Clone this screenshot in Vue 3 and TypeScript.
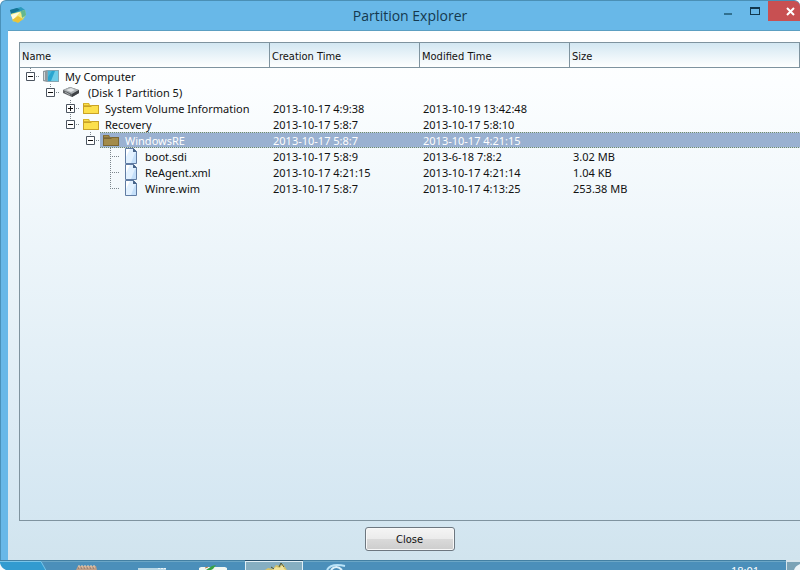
<script setup lang="ts">
import { computed, ref } from 'vue'

type Kind = 'computer' | 'disk' | 'folder' | 'file'

interface Entry {
  id: string
  name: string
  kind: Kind
  created?: string
  modified?: string
  size?: string
  children?: Entry[]
}

interface Row {
  entry: Entry
  guides: string[]
  expandable: boolean
  open: boolean
}

const root: Entry = {
  id: 'computer', name: 'My Computer', kind: 'computer',
  children: [{
    id: 'disk', name: '(Disk 1 Partition 5)', kind: 'disk',
    children: [
      { id: 'svi', name: 'System Volume Information', kind: 'folder', created: '2013-10-17 4:9:38', modified: '2013-10-19 13:42:48', children: [] },
      {
        id: 'recovery', name: 'Recovery', kind: 'folder', created: '2013-10-17 5:8:7', modified: '2013-10-17 5:8:10',
        children: [{
          id: 'winre', name: 'WindowsRE', kind: 'folder', created: '2013-10-17 5:8:7', modified: '2013-10-17 4:21:15',
          children: [
            { id: 'boot', name: 'boot.sdi', kind: 'file', created: '2013-10-17 5:8:9', modified: '2013-6-18 7:8:2', size: '3.02 MB' },
            { id: 'agent', name: 'ReAgent.xml', kind: 'file', created: '2013-10-17 4:21:15', modified: '2013-10-17 4:21:14', size: '1.04 KB' },
            { id: 'wim', name: 'Winre.wim', kind: 'file', created: '2013-10-17 5:8:7', modified: '2013-10-17 4:13:25', size: '253.38 MB' },
          ],
        }],
      },
    ],
  }],
}

const opened = ref(new Set(['computer', 'disk', 'recovery', 'winre']))
const selected = ref('winre')

function flatten(entry: Entry, parents: string[], last: boolean): Row[] {
  const open = opened.value.has(entry.id)
  const row: Row = {
    entry,
    guides: [...parents, last ? 'elbow' : 'tee'],
    expandable: entry.children !== undefined,
    open,
  }
  const below = [...parents, last ? 'blank' : 'line']
  const kids = open && entry.children ? entry.children : []
  return [row, ...kids.flatMap((kid, i) => flatten(kid, below, i === kids.length - 1))]
}

const rows = computed(() => flatten(root, [], true))

function toggle(id: string) {
  const next = new Set(opened.value)
  if (!next.delete(id)) next.add(id)
  opened.value = next
}
</script>

<template>
  <div class="desktop">
    <section class="window" aria-labelledby="window-title">
      <header class="titlebar">
        <svg class="app-icon" viewBox="0 0 18 18" aria-hidden="true">
          <path d="M1 4 12 1l4 3-13 5z" fill="#2b9bbd" />
          <path d="M1 4 8 2l3 2-9 4z" fill="#147293" />
          <path d="M2 8 16 4l1 5-3 5-10 2z" fill="#a9d08c" />
          <path d="m2 8 9-2 4 5-5 5-6-2z" fill="#f4ed83" />
          <path d="m2 9 9-3-7 8z" fill="#fffce0" />
          <path d="m3 14 6-4 5 3-5 4z" fill="#eac337" />
          <path d="m12 5 4-1 1 5-4 3z" fill="#63b78f" />
        </svg>
        <h1 id="window-title">Partition Explorer</h1>
        <div class="controls">
          <button type="button" aria-label="Minimize">
            <svg viewBox="0 0 27 21"><path d="M10 12h8v2h-8z" fill="#31708f" /></svg>
          </button>
          <button type="button" aria-label="Maximize">
            <svg viewBox="0 0 27 21"><path d="M9 6h10v8H9zM10 8v5h8V8z" fill="#12384d" fill-rule="evenodd" /></svg>
          </button>
          <button type="button" class="shut" aria-label="Close window">
            <svg viewBox="0 0 32 21"><path d="m19 7 7 7m0-7-7 7" stroke="#fff" stroke-width="2" /></svg>
          </button>
        </div>
      </header>

      <main class="body">
        <div class="listing">
          <table>
            <colgroup>
              <col class="col-name"><col class="col-date"><col class="col-date"><col>
            </colgroup>
            <thead>
              <tr>
                <th scope="col">Name</th>
                <th scope="col">Creation Time</th>
                <th scope="col">Modified Time</th>
                <th scope="col">Size</th>
              </tr>
            </thead>
            <tbody>
              <tr
                v-for="row in rows"
                :key="row.entry.id"
                :class="{ selected: selected === row.entry.id }"
                @click="selected = row.entry.id"
              >
                <td class="name">
                  <div class="node">
                    <span v-for="(guide, i) in row.guides" :key="i" class="guide" :class="guide">
                      <button
                        v-if="row.expandable && i === row.guides.length - 1"
                        type="button"
                        class="toggle"
                        :aria-label="(row.open ? 'Collapse ' : 'Expand ') + row.entry.name"
                        :aria-expanded="row.open"
                        @click.stop="toggle(row.entry.id)"
                      >
                        <svg viewBox="0 0 9 9">
                          <path d="M.5.5h8v8h-8z" fill="#fff" stroke="#4c5560" />
                          <path :d="row.open ? 'M2 4.5h5' : 'M2 4.5h5M4.5 2v5'" stroke="#111" />
                        </svg>
                      </button>
                    </span>
                    <span class="label">
                      <svg v-if="row.entry.kind === 'computer'" class="icon" viewBox="0 0 16 16">
                        <path d="M0 3 4 2v12l-4-1z" fill="#90999e" />
                        <path d="M1 4h1v8H1z" fill="#d4dadc" />
                        <path d="M4 2h12v12H4z" fill="#86a6b2" />
                        <path d="M5 3h10v10H5z" fill="#2aa5cf" />
                        <path d="M12 3h3v10h-7z" fill="#6fcde8" />
                        <path d="M5 3h4l-4 6z" fill="#4bb6d8" />
                      </svg>
                      <svg v-else-if="row.entry.kind === 'disk'" class="icon" viewBox="0 0 16 16">
                        <path d="m0 6 7-3 9 3v3l-7 4-9-4z" fill="#5e6265" />
                        <path d="m0 6 7-3 9 3-7 4z" fill="#a9aeb1" />
                        <path d="m3 6 5-2 4 2-4 2z" fill="#e2e5e7" />
                        <path d="m9 10 7-4v3l-7 4z" fill="#3d4144" />
                        <path d="m2 8 5 3" stroke="#a9adb0" />
                      </svg>
                      <svg v-else-if="row.entry.kind === 'folder'" class="icon" viewBox="0 0 16 16">
                        <path class="folder-back" d="M0 3h6l1 2h9v9H0z" />
                        <path class="folder-front" d="M1 7h7l1-1h6v7H1zM1 4h4l1 1H1z" />
                        <path class="folder-edge" d="M0 6.500h8l1-1h7M.5 4v9.500h15V5" />
                      </svg>
                      <svg v-else class="icon" viewBox="0 0 16 16">
                        <path d="M2.500.5h8l3 3v12h-11z" fill="#e2f1ff" stroke="#607ca3" />
                        <path d="M12 5h1v10H8z" fill="#c5e0fa" />
                        <path d="M3 1h4L3 9z" fill="#fff" />
                        <path d="M10 0v4h4z" fill="#476489" />
                      </svg>
                      <span class="text" :class="row.entry.kind">{{ row.entry.name }}</span>
                    </span>
                  </div>
                </td>
                <td>{{ row.entry.created }}</td>
                <td>{{ row.entry.modified }}</td>
                <td>{{ row.entry.size }}</td>
              </tr>
            </tbody>
          </table>
        </div>
        <footer class="actions">
          <button type="button" class="close">Close</button>
        </footer>
      </main>
    </section>

    <nav class="taskbar" aria-label="Taskbar">
      <button type="button" class="start" aria-label="Start">
        <svg viewBox="0 0 46 10">
          <path d="M0 1h41l5 9H0z" fill="#329bd0" />
          <path d="M0 1.5h41l5 9" fill="none" stroke="#79c4e8" />
          <path d="M0 3q1 5 6 7H0z" fill="#f4f8fa" />
        </svg>
      </button>
      <button type="button" class="task" aria-label="Notes">
        <svg viewBox="0 0 58 10">
          <path d="M19 6h18l1 4H17z" fill="#bd9d86" />
          <path d="M20 5v3m3-3v3m3-3v3m3-3v3m3-3v3m3-3v3" stroke="#f2d5b7" />
          <path d="M19 8h17" stroke="#776b67" stroke-dasharray="1 2" />
        </svg>
      </button>
      <button type="button" class="task" aria-label="Keyboard">
        <svg viewBox="0 0 58 10">
          <path d="M17 8h28v2H17z" fill="#b9d7e5" />
          <path d="M37 8.500h8" stroke="#e8f4f9" stroke-dasharray="2 1" />
        </svg>
      </button>
      <button type="button" class="task" aria-label="Editor">
        <svg viewBox="0 0 58 10">
          <path d="M18 7h24l2 1v2H16V8z" fill="#f1f7f3" />
          <path d="m23 10 6-4 4-1-3 4-2 1z" fill="#39a344" />
          <path d="m22 8 3-1" stroke="#be7c45" />
        </svg>
      </button>
      <button type="button" class="task active" aria-label="Partition Explorer">
        <svg viewBox="0 0 58 10">
          <path d="m20 10 3-2 5 1 3-4 4 1 3-2 4 6z" fill="#d5c36b" />
          <path d="m27 10 4-3 4 1 3-4 1 5 2 1z" fill="#f1e39c" />
          <path d="m34 7 2-4 3 4m-10 2-3-2" fill="none" stroke="#555428" />
        </svg>
      </button>
      <button type="button" class="task" aria-label="Browser">
        <svg viewBox="0 0 58 10">
          <path d="M20 10q4-7 18-4" fill="none" stroke="#b9e3f8" stroke-width="2" />
          <path d="M24 10q5-6 11 0" fill="none" stroke="#ddf1fa" stroke-width="2" />
        </svg>
      </button>
      <time class="clock">18:01</time>
      <button type="button" class="peek" aria-label="Show desktop">
        <svg viewBox="0 0 14 10"><path d="M8 10q1-4 6-6v6z" fill="#edf5f8" /></svg>
      </button>
    </nav>
  </div>
</template>

<style>
body {
  margin: 0;
  background: #fff;
}
</style>

<style scoped>
.desktop {
  display: flex;
  flex-direction: column;
  min-height: 100vh;
  overflow: hidden;
  font-family: "Noto Sans", "Open Sans", sans-serif;
  font-size: 11px;
  color: #111;
}

button {
  padding: 0;
  border: 0;
  background: none;
  font: inherit;
}

svg {
  display: block;
}

.window {
  flex: 1;
  display: flex;
  flex-direction: column;
  box-sizing: border-box;
  padding-left: 7px;
  border-top: 1px solid #4a8fb5;
  border-left: 1px solid #4a91b9;
  border-radius: 6px 6px 0 0;
  overflow: hidden;
  background: #68b8e8;
}

.titlebar {
  display: grid;
  grid-template-columns: 1fr auto 1fr;
  height: 29px;
}

.app-icon {
  width: 18px;
  height: 18px;
  margin-top: 5px;
  margin-left: 1px;
}

h1 {
  margin: 0;
  padding-left: 12px;
  font-family: "Open Sans", sans-serif;
  font-size: 14px;
  font-weight: 400;
  line-height: 29px;
  color: #14384f;
}

.controls {
  display: flex;
  justify-content: flex-end;
  align-items: flex-start;
}

.controls button {
  width: 27px;
  height: 20px;
}

.controls button svg {
  width: 100%;
  height: 21px;
}

.controls .shut {
  width: 32px;
  background: #c85052;
}

.body {
  flex: 1;
  display: flex;
  flex-direction: column;
  padding: 11px 0 0 11px;
  border-top: 1px solid #5c9fc2;
  background: linear-gradient(#fff, #fcfeff 10%, #d5e7f2 90%, #d1e4ee);
}

.listing {
  flex: 1;
  border: 1px solid #7f939f;
  border-right: 0;
}

table {
  width: 100%;
  table-layout: fixed;
  border-collapse: separate;
  border-spacing: 0;
}

.col-name {
  width: 250px;
}

.col-date {
  width: 150px;
}

th {
  height: 22px;
  padding: 2px 2px 0;
  border-right: 1px solid #7f939f;
  border-bottom: 1px solid #7f939f;
  background: linear-gradient(#d3e7f2, #fff);
  font-family: "DejaVu Sans Condensed", "DejaVu Sans", sans-serif;
  font-size: 11px;
  font-weight: 400;
  text-align: left;
}

td {
  box-sizing: border-box;
  height: 16px;
  padding: 1px 3px 0;
  line-height: 15px;
  white-space: nowrap;
}

.name {
  padding: 0;
}

.node {
  display: flex;
  height: 16px;
}

.guide {
  flex: none;
  display: grid;
  place-items: center;
  width: 20px;
  height: 16px;
  --dots-y: repeating-linear-gradient(#7b858c 0 1px, transparent 1px 2px);
  --dots-x: repeating-linear-gradient(90deg, #7b858c 0 1px, transparent 1px 2px);
}

.guide.line {
  background: var(--dots-y) 10px 0 / 1px 16px no-repeat;
}

.guide.elbow {
  background:
    var(--dots-y) 10px 0 / 1px 8px no-repeat,
    var(--dots-x) 10px 8px / 10px 1px no-repeat;
}

.guide.tee {
  background:
    var(--dots-y) 10px 0 / 1px 16px no-repeat,
    var(--dots-x) 10px 8px / 10px 1px no-repeat;
}

.toggle {
  width: 9px;
  height: 9px;
}

.toggle svg {
  width: 9px;
  height: 9px;
}

.label {
  flex: 1;
  display: flex;
  gap: 6px;
  padding-left: 3px;
}

.icon {
  flex: none;
  width: 16px;
  height: 16px;
}

.text {
  padding-top: 1px;
}

.text.disk {
  padding-left: 3px;
}

.folder-back {
  fill: #d9b52c;
}

.folder-front {
  fill: #fce04c;
}

.folder-edge {
  fill: none;
  stroke: #c9a227;
}

.selected td:not(.name),
.selected .label {
  background:
    repeating-linear-gradient(90deg, #6f8a6b 0 1px, #c3d3e6 1px 2px) 0 0 / 100% 1px no-repeat,
    repeating-linear-gradient(90deg, #6f8a6b 0 1px, #c3d3e6 1px 2px) 0 100% / 100% 1px no-repeat,
    #9ab1d1;
  color: #fff;
}

.selected .folder-back {
  fill: #84703c;
}

.selected .folder-front {
  fill: #a38b49;
}

.selected .folder-edge {
  stroke: #7a6633;
}

.actions {
  display: flex;
  justify-content: center;
  padding: 6px 0 9px;
}

.close {
  width: 90px;
  height: 24px;
  border: 1px solid #6d7780;
  border-radius: 3px;
  background: linear-gradient(#f5f5f5, #ebebeb 50%, #dadada 50%, #cdcdcd);
  box-shadow: inset 0 0 0 1px #f8f8f8;
  font-family: "DejaVu Sans Condensed", "DejaVu Sans", sans-serif;
  font-size: 11px;
  color: #111;
}

.taskbar {
  flex: none;
  display: flex;
  height: 10px;
  overflow: hidden;
  background: linear-gradient(#4380a3 0 1px, #6ba6c6 1px 2px, #4b8fba 2px);
}

.start {
  width: 46px;
  height: 10px;
  margin-right: 13px;
}

.task {
  width: 58px;
  height: 10px;
  margin-right: 4px;
}

.task svg {
  width: 58px;
  height: 10px;
}

.task.active {
  background: #86aec1;
  box-shadow: inset 0 1px #29506b, inset 1px 2px #e0eef5, inset -1px 0 #e0eef5;
}

.clock {
  margin-left: auto;
  padding-top: 6px;
  font-size: 11px;
  line-height: 9px;
  color: #fff;
}

.peek {
  width: 14px;
  height: 10px;
  margin-left: 27px;
  background: #7ba3b6;
  box-shadow: inset 1px 2px #d6e5ec;
}
</style>
